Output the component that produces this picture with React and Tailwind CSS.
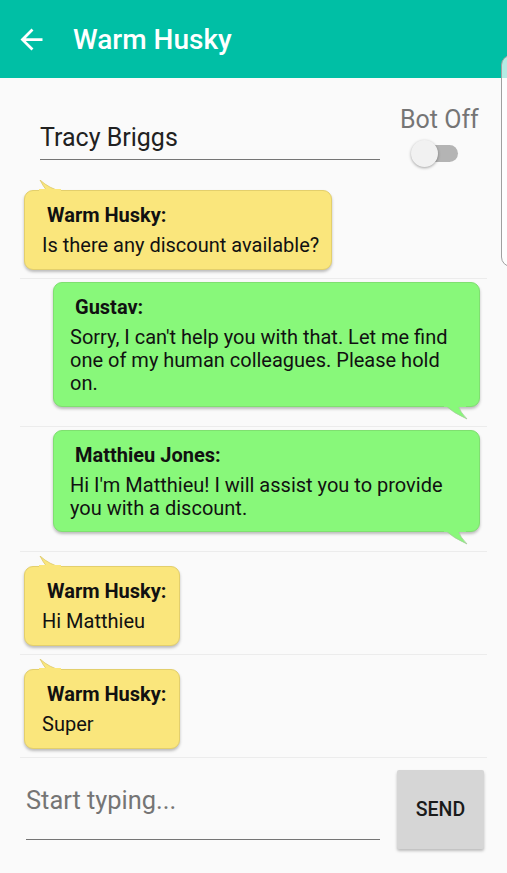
import { useState } from 'react';

const messages = [
  { id: 1, from: 'Warm Husky', text: 'Is there any discount available?', bot: false },
  { id: 2, from: 'Gustav', text: "Sorry, I can't help you with that. Let me find one of my human colleagues. Please hold on.", bot: true },
  { id: 3, from: 'Matthieu Jones', text: "Hi I'm Matthieu! I will assist you to provide you with a discount.", bot: true },
  { id: 4, from: 'Warm Husky', text: 'Hi Matthieu', bot: false },
  { id: 5, from: 'Warm Husky', text: 'Super', bot: false },
];

function Bubble({ m }) {
  if (!m.bot) {
    return (
      <div className="border-b border-[#ececec] pt-[14px] pb-[8px]">
        <div className="relative ml-1 w-fit">
          {/* tail */}
          <svg className="absolute left-[14px] top-[-10px]" width="24" height="12" viewBox="0 0 24 12">
            <path d="M2 0 Q5 6 9 11 L23 11 Q12 9 2 0 Z" fill="#fae67c" stroke="#dcc86a" strokeWidth="0.8" />
          </svg>
          <div className="relative rounded-[9px] border border-[#e3cf6c] bg-[#fae67c] pt-[13px] pb-[12px] pl-[17px] pr-[12px] shadow-[0_2px_3px_rgba(0,0,0,0.25)]">
            <div className="ml-[5px] text-[20px] leading-[23px] font-bold text-[#111]">{m.from}:</div>
            <div className="mt-[7px] text-[20px] leading-[23px] text-[#111]">{m.text}</div>
          </div>
          <div className="absolute left-[15px] top-[-1px] h-[3px] w-[22px] bg-[#fae67c]" />
        </div>
      </div>
    );
  }
  return (
    <div className="border-b border-[#ececec] pt-[3px] pb-[19px]">
      <div className="relative ml-auto mr-[7px] w-[427px]">
        <div className="relative rounded-[9px] border border-[#7fe070] bg-[#88f87a] pt-[13px] pb-[11px] pl-[16px] pr-[20px] shadow-[0_2px_3px_rgba(0,0,0,0.25)]">
          <div className="ml-[5px] text-[20px] leading-[23px] font-bold text-[#111]">{m.from}:</div>
          <div className="mt-[7px] text-[20px] leading-[23px] text-[#111]">{m.text}</div>
        </div>
        <svg className="absolute left-[390px] bottom-[-14px]" width="28" height="16" viewBox="0 0 28 16">
          <path d="M2 0 Q10 8 24 14 Q17 7 15 0 Z" fill="#88f87a" stroke="#a6c69c" strokeWidth="0.7" />
        </svg>
        <div className="absolute left-[391px] bottom-[0px] h-[3px] w-[22px] bg-[#88f87a]" />
      </div>
    </div>
  );
}

export default function App() {
  const [botOn, setBotOn] = useState(false);
  const [draft, setDraft] = useState('');

  return (
    <div className="relative h-[873px] w-[507px] overflow-hidden bg-[#fafafa] font-['Roboto',sans-serif]">
      {/* App bar */}
      <div className="flex h-[78px] items-center bg-[#00bfa5]">
        <svg className="ml-[15px]" width="33" height="33" viewBox="0 0 24 24">
          <path d="M20 11H7.83l5.59-5.59L12 4l-8 8 8 8 1.41-1.41L7.83 13H20v-2z" fill="#fff" />
        </svg>
        <div className="ml-[25px] mt-[2px] text-[28px] font-medium text-white">Warm Husky</div>
      </div>

      {/* Customer + bot toggle */}
      <div className="flex h-[102px] pl-[40px]">
        <div className="mt-[42px] h-[40px] w-[340px] border-b border-[#757575] pt-[2px]">
          <div className="text-[25px] leading-[32px] text-[#212121]">Tracy Briggs</div>
        </div>
        <div className="ml-[20px] flex flex-col pt-[28px]">
          <div className="text-[25px] leading-[28px] text-[#757575]">Bot Off</div>
          <button onClick={() => setBotOn(!botOn)} className="relative ml-[11px] mt-[6px] h-[26px] w-[48px]">
            <div className="absolute left-[12px] top-[5px] h-[17px] w-[35px] rounded-full bg-[#b4b4b4]" />
            <div className="absolute left-0 top-0 h-[27px] w-[27px] rounded-full bg-[#f1f1f1] shadow-[0_1px_3px_rgba(0,0,0,0.35)]" />
          </button>
        </div>
      </div>

      {/* Messages */}
      <div className="mx-5 -mt-[4px]">
        {messages.map((m) => (
          <Bubble key={m.id} m={m} />
        ))}
      </div>

      {/* Composer */}
      <div className="flex pl-[26px] pr-[23px] pt-[12px]">
        <div className="mt-[14px] h-[56px] w-[354px] border-b border-[#757575]">
          <input
            value={draft}
            onChange={(e) => setDraft(e.target.value)}
            placeholder="Start typing..."
            className="w-full bg-transparent text-[25.4px] leading-[32px] text-[#212121] outline-none placeholder:text-[#757575]"
          />
        </div>
        <button className="ml-auto h-[79px] w-[87px] rounded-[2px] bg-[#d6d6d6] text-[19.5px] font-medium text-[#1a1a1a] shadow-[0_2px_3px_rgba(0,0,0,0.25)]">
          SEND
        </button>
      </div>

      {/* edge of a sliding panel */}
      <div className="absolute left-[501px] top-[55px] h-[212px] w-[20px] rounded-[14px] border border-[#a0a0a0] bg-white/70" />
    </div>
  );
}
